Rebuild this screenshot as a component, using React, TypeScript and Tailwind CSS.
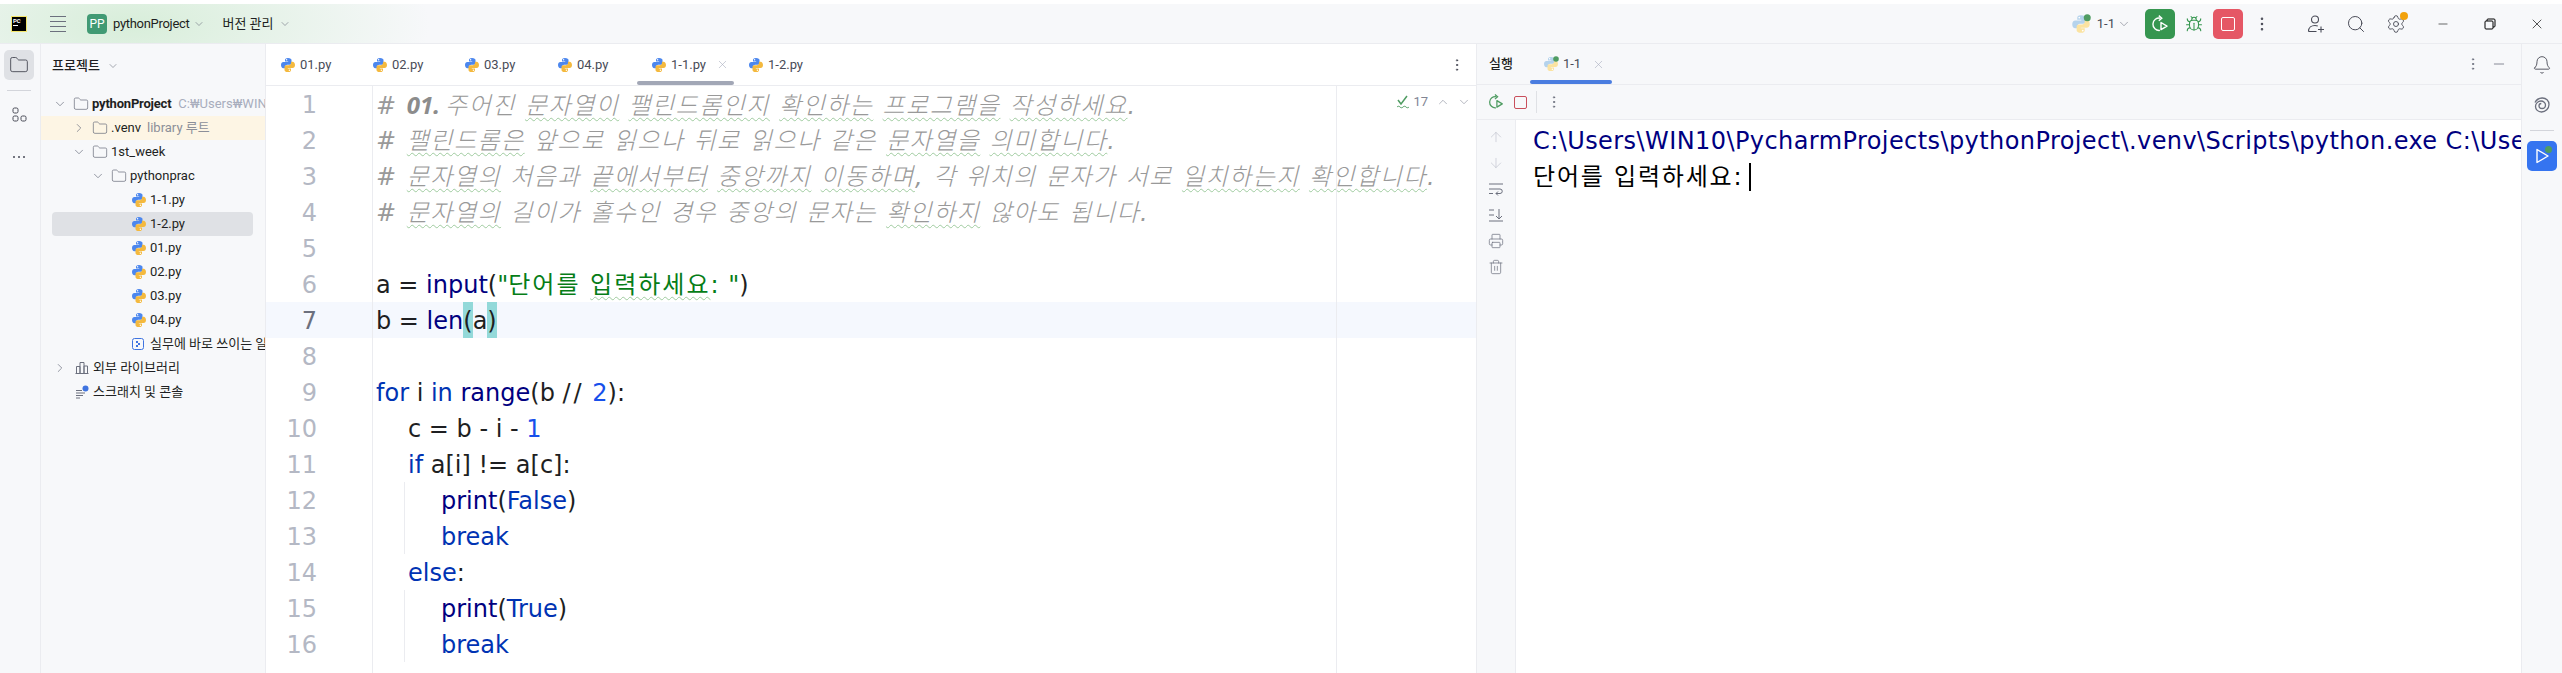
import {
  ArrowDown,
  ArrowUp,
  Bell,
  Bug,
  ChevronDown,
  ChevronRight,
  ChevronUp,
  Folder,
  Minus,
  MoreVertical,
  Printer,
  Search,
  Settings,
  Trash2,
  X,
} from "lucide-react";
import type { ReactNode } from "react";

const MONO = "font-['DejaVu_Sans','Noto_Sans_CJK_KR',sans-serif]";

function PyIcon({ faded = false, dot = false, size = 16 }: { faded?: boolean; dot?: boolean; size?: number }) {
  const blue = faded ? "#b5d3ec" : "#4c87ee";
  const yellow = faded ? "#fbe3a1" : "#f4b93e";
  return (
    <svg width={size} height={size} viewBox="0 0 16 16" className="shrink-0">
      <path
        d="M8 1C5.6 1 5 2 5 3.1V4.6h3.2v.5H3.4C2 5.1 1 6.2 1 8.1s1 3.2 2.4 3.2H5V9.900c0-1.200 1-2.200 2.200-2.200h2.600c1 0 1.700-.8 1.700-1.800V3.100C11.500 2 10.400 1 8 1z"
        fill={blue}
      />
      <circle cx="6.6" cy="2.8" r=".7" fill="#fff" />
      <path
        d="M8 15c2.400 0 3-1 3-2.100v-1.500H7.800v-.5h4.800c1.400 0 2.400-1.100 2.400-3s-1-3.200-2.400-3.200H11v1.400c0 1.200-1 2.200-2.200 2.200H6.200c-1 0-1.700.8-1.700 1.800v2.800C4.500 14 5.600 15 8 15z"
        fill={yellow}
      />
      <circle cx="9.4" cy="13.2" r=".7" fill="#fff" />
      {dot && <circle cx="13" cy="3" r="2.800" fill="#4f9c62" />}
    </svg>
  );
}

function Rerun({ color, size = 20 }: { color: string; size?: number }) {
  return (
    <svg width={size} height={size} viewBox="0 0 20 20" fill="none" stroke={color} strokeWidth="1.4">
      <path d="M10.500 4.200a6.200 6.200 0 1 0-.6 12.200" />
      <path d="M8.800 1.600l3 2.600-3 2.600" />
      <path d="M11 8.500l6 3.600-6 3.600z" strokeLinejoin="round" />
    </svg>
  );
}

function Row({
  pad,
  chevron,
  children,
  className = "",
}: {
  pad: string;
  chevron: "down" | "right";
  children: ReactNode;
  className?: string;
}) {
  return (
    <div className={`flex h-[24px] items-center whitespace-nowrap ${pad} ${className}`}>
      <span className="flex w-[14px] shrink-0 items-center justify-center text-[#6c707e]">
        {chevron === "down" ? (
          <ChevronDown size={14} strokeWidth={1.2} />
        ) : (
          <ChevronRight size={14} strokeWidth={1.2} />
        )}
      </span>
      <Folder size={16} strokeWidth={1.1} className="mr-[3px] ml-[6px] shrink-0 text-[#6c707e]" />
      {children}
    </div>
  );
}

function FileRow({ name, selected = false }: { name: string; selected?: boolean }) {
  return (
    <div
      className={`flex h-[24px] items-center gap-[3px] ${
        selected ? "mr-[12px] ml-[11px] rounded-[4px] bg-[#dfe1e5] pl-[79px]" : "pl-[90px]"
      }`}
    >
      <PyIcon />
      <span>{name}</span>
    </div>
  );
}

function EditorTab({ name, w, active = false }: { name: string; w: string; active?: boolean }) {
  return (
    <div className={`relative flex h-full items-center gap-[4px] pl-[14px] whitespace-nowrap ${w}`}>
      <PyIcon />
      <span className="text-[#494b57]">{name}</span>
      {active && <X size={13} strokeWidth={1.1} className="ml-[6px] shrink-0 text-[#a8adbd]" />}
      {active && <div className="absolute inset-x-0 bottom-0 h-[4px] rounded-[2px] bg-[#a2a7b6]" />}
    </div>
  );
}

function Wavy({ children }: { children: ReactNode }) {
  return (
    <span className="underline decoration-[#9fcb9f] decoration-wavy decoration-1 underline-offset-[3px]">
      {children}
    </span>
  );
}

function Line({
  n,
  current = false,
  indent = 0,
  guide = false,
  children,
}: {
  n: number;
  current?: boolean;
  indent?: number;
  guide?: boolean;
  children?: ReactNode;
}) {
  return (
    <div className={`flex h-[36px] leading-[38px] ${current ? "bg-[#f5f8fe]" : ""}`}>
      <div className={`w-[51px] shrink-0 text-right ${current ? "text-[#6c707e]" : "text-[#b4b8c4]"}`}>{n}</div>
      <div className="ml-[55px] min-w-0 flex-1 border-l border-[#ebecf0] pl-[3px] whitespace-pre">
        {indent === 0 && children}
        {indent === 1 && <div className="pl-[32px]">{children}</div>}
        {indent === 2 && (
          <div className={`ml-[28px] h-[36px] pl-[36px] ${guide ? "border-l border-[#ebecf0]" : ""}`}>{children}</div>
        )}
      </div>
    </div>
  );
}

const Kw = ({ children }: { children: ReactNode }) => <span className="text-[#0033b3]">{children}</span>;
const Fn = ({ children }: { children: ReactNode }) => <span className="text-[#000080]">{children}</span>;
const Num = ({ children }: { children: ReactNode }) => <span className="text-[#1750eb]">{children}</span>;
const Brace = ({ children }: { children: ReactNode }) => (
  <span className="inline-block h-[36px] bg-[#93d9d9] align-top">{children}</span>
);

function Comment({ children }: { children: ReactNode }) {
  return <span className="font-light tracking-[1.5px] text-[#999999] italic">{children}</span>;
}

export default function App() {
  return (
    <div className="h-[673px] w-[2562px] overflow-hidden bg-white pt-[4px] font-['Roboto','Noto_Sans_CJK_KR',sans-serif] text-[13px] text-[#1e1f22]">
      {/* title bar */}
      <div className="flex h-[40px] items-center border-b border-[#ebecf0] bg-[radial-gradient(ellipse_300px_110px_at_130px_20px,#d8eeda,#f7f8fa)]">
        <div className="ml-[11px] flex h-[16px] w-[16px] flex-col border border-[#f3e56b] bg-black px-[1px] text-[6px] leading-[7px] font-bold text-white">
          PC
          <div className="mt-[1px] h-[1px] w-[5px] bg-white" />
        </div>
        <svg width="16" height="16" viewBox="0 0 16 16" fill="none" stroke="#6c707e" className="ml-[23px]">
          <path d="M0 .5h16M0 5.500h16M0 10.500h16M0 15.500h16" />
        </svg>
        <div className="ml-[21px] flex h-[20px] w-[20px] items-center justify-center rounded-[4px] bg-[#419a74] text-[12px] text-white">
          PP
        </div>
        <span className="ml-[6px] tracking-[-0.3px]">pythonProject</span>
        <ChevronDown size={12} strokeWidth={1.2} className="ml-[4px] text-[#6c707e]" />
        <span className="ml-[17px]">버전 관리</span>
        <ChevronDown size={12} strokeWidth={1.2} className="ml-[5px] text-[#6c707e]" />

        <div className="ml-auto flex items-center">
          <PyIcon faded dot size={20} />
          <span className="ml-[6px] text-[#494b57]">1-1</span>
          <ChevronDown size={14} strokeWidth={1} className="ml-[2px] text-[#6c707e]" />
          <div className="ml-[14px] flex h-[30px] w-[30px] items-center justify-center rounded-[5px] bg-[#369650]">
            <Rerun color="#ffffff" />
          </div>
          <Bug size={18} strokeWidth={1.4} className="ml-[10px] text-[#369650]" />
          <div className="ml-[10px] flex h-[30px] w-[30px] items-center justify-center rounded-[5px] bg-[#e55765]">
            <div className="h-[14px] w-[14px] rounded-[2px] border-[1.5px] border-white" />
          </div>
          <MoreVertical size={18} strokeWidth={1.4} className="ml-[10px] text-[#494b57]" />
          <svg width="20" height="20" viewBox="0 0 20 20" fill="none" stroke="#494b57" strokeWidth="1.1" className="ml-[35px]">
            <circle cx="9" cy="5.500" r="3.500" />
            <path d="M2.500 17.500c0-4 3-6 6.500-6 1 0 2 .2 2.800.5M2.500 17.500h8M15 12.500v6M12 15.500h6" />
          </svg>
          <Search size={20} strokeWidth={1.2} className="ml-[20px] text-[#494b57]" />
          <div className="relative ml-[20px]">
            <Settings size={20} strokeWidth={1.1} className="text-[#494b57]" />
            <div className="absolute -top-[2px] -right-[2px] h-[8px] w-[8px] rounded-full bg-[#f2a20c]" />
          </div>
          <Minus size={14} strokeWidth={1} className="ml-[30px] text-black" />
          <svg width="12" height="12" viewBox="0 0 12 12" fill="none" stroke="#000" className="ml-[34px]">
            <rect x="1" y="3" width="8" height="8" rx="1" />
            <path d="M3 3V2a1 1 0 0 1 1-1h6a1 1 0 0 1 1 1v6a1 1 0 0 1-1 1H9" />
          </svg>
          <X size={16} strokeWidth={1} className="mr-[17px] ml-[33px] text-black" />
        </div>
      </div>

      <div className="flex h-[629px]">
        {/* left tool stripe */}
        <div className="flex w-[41px] shrink-0 flex-col items-center border-r border-[#ebecf0] bg-[#f7f8fa] pt-[6px] pr-[2px]">
          <div className="flex h-[30px] w-[30px] items-center justify-center rounded-[5px] bg-[#dfe1e5]">
            <Folder size={20} strokeWidth={1.1} className="text-[#494b57]" />
          </div>
          <div className="mt-[10px] h-px w-[24px] bg-[#d3d5db]" />
          <svg width="18" height="18" viewBox="0 0 18 18" fill="none" stroke="#494b57" className="mt-[15px]">
            <rect x="3" y="2" width="5" height="5" rx="1.5" />
            <rect x="3" y="10" width="5" height="5" rx="1.5" />
            <rect x="11" y="10" width="5" height="5" rx="1.5" />
          </svg>
          <div className="mt-[32px] flex gap-[3px]">
            <span className="h-[2px] w-[2px] rounded-full bg-[#494b57]" />
            <span className="h-[2px] w-[2px] rounded-full bg-[#494b57]" />
            <span className="h-[2px] w-[2px] rounded-full bg-[#494b57]" />
          </div>
        </div>

        {/* project panel */}
        <div className="w-[225px] shrink-0 overflow-hidden border-r border-[#ebecf0] bg-[#f7f8fa]">
          <div className="flex h-[44px] items-center pl-[11px] font-medium">
            프로젝트
            <ChevronDown size={12} strokeWidth={1.2} className="ml-[7px] text-[#6c707e]" />
          </div>
          <div className="pt-[4px]">
            <Row pad="pl-[12px]" chevron="down">
              <span className="font-bold tracking-[-0.2px]">pythonProject</span>
              <span className="ml-[7px] text-[#a8adbd]">C:₩Users₩WIN10</span>
            </Row>
            <Row pad="pl-[31px]" chevron="right" className="bg-[#fdf5e4]">
              <span>.venv</span>
              <span className="ml-[6px] text-[#8c8f99]">library 루트</span>
            </Row>
            <Row pad="pl-[31px]" chevron="down">
              1st_week
            </Row>
            <Row pad="pl-[50px]" chevron="down">
              pythonprac
            </Row>
            <FileRow name="1-1.py" />
            <FileRow name="1-2.py" selected />
            <FileRow name="01.py" />
            <FileRow name="02.py" />
            <FileRow name="03.py" />
            <FileRow name="04.py" />
            <div className="flex h-[24px] items-center gap-[6px] pl-[91px] whitespace-nowrap">
              <svg width="12" height="12" viewBox="0 0 12 12" fill="none" className="shrink-0">
                <rect x=".5" y=".5" width="11" height="11" rx="2" stroke="#3f74e0" />
                <rect x="4" y="3" width="2" height="2" fill="#3f74e0" />
                <rect x="6" y="5" width="2" height="2" fill="#3f74e0" />
                <rect x="4" y="7" width="2" height="2" fill="#3f74e0" />
              </svg>
              실무에 바로 쓰이는 일상 자동화
            </div>
            <div className="flex h-[24px] items-center pl-[12px]">
              <span className="flex w-[14px] justify-center text-[#6c707e]">
                <ChevronRight size={14} strokeWidth={1.2} />
              </span>
              <svg width="14" height="14" viewBox="0 0 14 14" fill="none" stroke="#6c707e" className="mr-[4px] ml-[8px]">
                <path d="M1.500 12.500V5.500h3.500v7M5 12.500V1.500h4v11M9 12.500V5h3.500v7.500M.5 12.500h13" />
              </svg>
              외부 라이브러리
            </div>
            <div className="flex h-[24px] items-center pl-[34px]">
              <svg width="14" height="14" viewBox="0 0 14 14" fill="none" className="mr-[4px]">
                <path d="M1 5.500h6M1 8h9M1 10.500h7M1 13h4" stroke="#6c707e" />
                <circle cx="10.500" cy="3.500" r="3" fill="#3f74e0" />
              </svg>
              스크래치 및 콘솔
            </div>
          </div>
        </div>

        {/* editor */}
        <div className="relative w-[1210px] shrink-0">
          <div className="flex h-[42px] items-center border-b border-[#ebecf0]">
            <EditorTab name="01.py" w="w-[92px]" />
            <EditorTab name="02.py" w="w-[92px]" />
            <EditorTab name="03.py" w="w-[93px]" />
            <EditorTab name="04.py" w="w-[94px]" />
            <EditorTab name="1-1.py" w="w-[97px]" active />
            <EditorTab name="1-2.py" w="w-[97px]" />
            <MoreVertical size={16} strokeWidth={1.5} className="mr-[11px] ml-auto text-[#494b57]" />
          </div>
          <div className={`relative text-[24px] ${MONO}`}>
            <div className="absolute top-0 left-[1070px] h-[590px] w-px bg-[#ebecf0]" />
            <div className="absolute top-[6px] right-[5px] z-10 flex items-center font-['Roboto',sans-serif] text-[13px] text-[#818594]">
              <svg width="14" height="16" viewBox="0 0 14 16" fill="none" stroke="#4f9c62" strokeWidth="1.5" className="mr-[3px]">
                <path d="M2 6l3 4 6-8" />
                <path d="M1 13c1-1 2-1 3 0s2 1 3 0 2-1 3 0 2 1 3 0" strokeWidth="1" />
              </svg>
              17
              <ChevronUp size={14} strokeWidth={1} className="ml-[8px]" />
              <ChevronDown size={14} strokeWidth={1} className="ml-[7px]" />
            </div>
            <Line n={1}>
              <Comment>
                #{" "}
                <b className="mr-[5px] font-['Noto_Sans',sans-serif] font-bold tracking-normal text-[#8c8c8c]">01.</b>
                주어진 <Wavy>문자열이</Wavy> <Wavy>팰린드롬인지</Wavy> <Wavy>확인하는</Wavy> <Wavy>프로그램을</Wavy>{" "}
                <Wavy>작성하세요</Wavy>.
              </Comment>
            </Line>
            <Line n={2}>
              <Comment>
                # <Wavy>팰린드롬은</Wavy> 앞으로 읽으나 뒤로 읽으나 같은 <Wavy>문자열을</Wavy>{" "}
                <Wavy>의미합니다</Wavy>.
              </Comment>
            </Line>
            <Line n={3}>
              <Comment>
                # <Wavy>문자열의</Wavy> 처음과 <Wavy>끝에서부터</Wavy> <Wavy>중앙까지</Wavy>{" "}
                <Wavy>이동하며</Wavy>, 각 위치의 문자가 서로 <Wavy>일치하는지</Wavy> <Wavy>확인합니다</Wavy>.
              </Comment>
            </Line>
            <Line n={4}>
              <Comment>
                # <Wavy>문자열의</Wavy> 길이가 홀수인 경우 중앙의 문자는 <Wavy>확인하지</Wavy> 않아도 됩니다.
              </Comment>
            </Line>
            <Line n={5} />
            <Line n={6}>
              a = <Fn>input</Fn>(
              <span className="text-[#067d17]">
                "
                <span className="tracking-[2px]">
                  단어를 <Wavy>입력하세요</Wavy>:
                </span>{" "}
                "
              </span>
              )
            </Line>
            <Line n={7} current>
              b = <Fn>len</Fn>
              <Brace>(</Brace>a<Brace>)</Brace>
            </Line>
            <Line n={8} />
            <Line n={9}>
              <Kw>for</Kw> i <Kw>in</Kw> <Fn>range</Fn>(b <span className="tracking-[3px]">//</span> <Num>2</Num>):
            </Line>
            <Line n={10} indent={1}>
              c = b - i - <Num>1</Num>
            </Line>
            <Line n={11} indent={1}>
              <Kw>if</Kw> a[i] != a[c]:
            </Line>
            <Line n={12} indent={2} guide>
              <Fn>print</Fn>(<Kw>False</Kw>)
            </Line>
            <Line n={13} indent={2} guide>
              <Kw>break</Kw>
            </Line>
            <Line n={14} indent={1}>
              <Kw>else</Kw>:
            </Line>
            <Line n={15} indent={2} guide>
              <Fn>print</Fn>(<Kw>True</Kw>)
            </Line>
            <Line n={16} indent={2} guide>
              <Kw>break</Kw>
            </Line>
            <div className="ml-[106px] h-[12px] border-l border-[#ebecf0]" />
          </div>
        </div>

        {/* run panel */}
        <div className="flex min-w-0 flex-1 flex-col overflow-hidden border-l border-[#ebecf0]">
          <div className="flex h-[41px] shrink-0 items-center border-b border-[#ebecf0] bg-[#f7f8fa]">
            <span className="ml-[12px] font-medium">실행</span>
            <div className="relative ml-[17px] flex h-full w-[82px] items-center pl-[13px]">
              <PyIcon faded dot />
              <span className="ml-[4px] text-[#494b57]">1-1</span>
              <X size={13} strokeWidth={1.1} className="ml-[11px] text-[#a8adbd]" />
              <div className="absolute inset-x-0 bottom-0 h-[4px] rounded-[2px] bg-[#4a7de0]" />
            </div>
            <MoreVertical size={16} strokeWidth={1.5} className="ml-auto text-[#6c707e]" />
            <Minus size={16} strokeWidth={1.2} className="mr-[14px] ml-[10px] text-[#6c707e]" />
          </div>
          <div className="flex h-[35px] shrink-0 items-center border-b border-[#ebecf0] bg-[#f7f8fa]">
            <div className="ml-[10px]">
              <Rerun color="#4f9c62" size={18} />
            </div>
            <div className="ml-[9px] h-[13px] w-[13px] rounded-[2px] border-[1.5px] border-[#c94f5c]" />
            <div className="ml-[9px] h-[22px] w-px bg-[#dfe1e5]" />
            <MoreVertical size={16} strokeWidth={1.5} className="ml-[9px] text-[#6c707e]" />
          </div>
          <div className="flex min-h-0 flex-1">
            <div className="flex w-[39px] shrink-0 flex-col items-center gap-[10px] border-r border-[#ebecf0] bg-[#f7f8fa] pt-[9px] text-[#6c707e]">
              <ArrowUp size={16} strokeWidth={1.1} className="text-[#c4c7d0]" />
              <ArrowDown size={16} strokeWidth={1.1} className="text-[#c4c7d0]" />
              <svg width="16" height="16" viewBox="0 0 16 16" fill="none" stroke="#6c707e">
                <path d="M1 3h14M1 8h11a2 2 0 0 1 0 4.500H8m2-2-2 2 2 2M1 12.500h4" />
              </svg>
              <svg width="16" height="16" viewBox="0 0 16 16" fill="none" stroke="#6c707e">
                <path d="M1 3h5M1 8h5M1 14h14M11 2v10M8 9l3 3 3-3" />
              </svg>
              <Printer size={16} strokeWidth={1.1} />
              <Trash2 size={16} strokeWidth={1.1} />
            </div>
            <div className={`min-w-0 flex-1 pt-[3px] pl-[17px] text-[24px] leading-[36px] whitespace-pre ${MONO}`}>
              <div className="overflow-hidden tracking-[0.42px] text-[#000080]">
                C:\Users\WIN10\PycharmProjects\pythonProject\.venv\Scripts\python.exe C:\Users
              </div>
              <div className="flex items-center tracking-[1.8px] text-black">
                단어를 입력하세요:
                <span className="ml-[6px] h-[28px] w-[2px] bg-black" />
              </div>
            </div>
          </div>
        </div>

        {/* right tool stripe */}
        <div className="flex w-[41px] shrink-0 flex-col items-center border-l border-[#ebecf0] bg-[#f7f8fa] pt-[11px] text-[#494b57]">
          <Bell size={20} strokeWidth={1.1} />
          <svg width="20" height="20" viewBox="0 0 20 20" fill="none" stroke="#6c707e" strokeWidth="1.3" className="mt-[20px]">
            <path d="M3 7.500C4.500 4.500 7.500 3 10.500 3c3.500 0 6.500 2.500 6.500 6.500 0 4-3.500 7.500-7.500 7.500-3.500 0-6-2.500-6-5.500 0-3 2.500-5.500 5.500-5.500 2.500 0 4.500 2 4.500 4s-1.500 3.500-3.500 3.500-3-1.200-3-2.700 1-2.300 2.300-2.300" />
          </svg>
          <div className="mt-[15px] h-px w-[24px] bg-[#d3d5db]" />
          <div className="relative mt-[10px] flex h-[30px] w-[30px] items-center justify-center rounded-[5px] bg-[#3574f0]">
            <svg width="18" height="18" viewBox="0 0 18 18" fill="none" stroke="#fff" strokeWidth="1.4">
              <path d="M4 2.500l11 6.500-11 6.500z" strokeLinejoin="round" />
            </svg>
            <div className="absolute top-[5px] right-[5px] h-[7px] w-[7px] rounded-full bg-[#4f9c62]" />
          </div>
        </div>
      </div>
    </div>
  );
}
